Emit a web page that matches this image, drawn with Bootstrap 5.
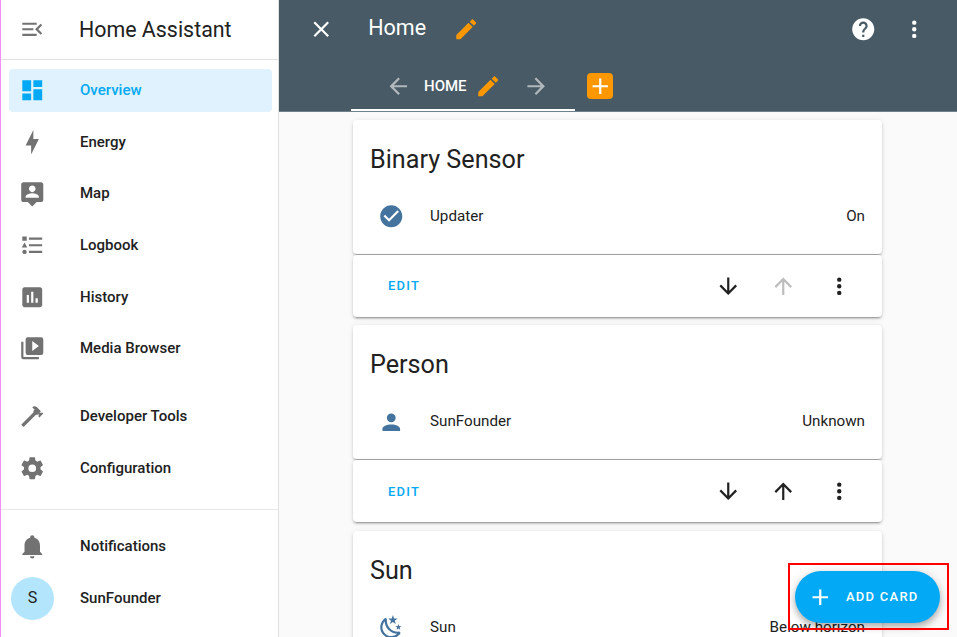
<!DOCTYPE html>
<html lang="en">
<head>
  <meta charset="UTF-8">
  <meta name="viewport" content="width=device-width, initial-scale=1.0" />
  <title>Home Assistant</title>
  <link href="https://cdn.jsdelivr.net/npm/bootstrap@5.3.0/dist/css/bootstrap.min.css" rel="stylesheet">
  <style>
    body {
      font-family: Roboto, "Liberation Sans", sans-serif;
      color: #212121;
      background: #fafafa;
      height: 100vh;
      overflow: hidden;
    }

    .mdi {
      width: 26.5px;
      height: 26.5px;
      fill: currentColor;
      flex: none;
      display: block;
    }

    .app-shell {
      height: 637px;
      border-left: 1px solid #f48cf4;
    }

    /* sidebar */
    .ha-sidebar {
      width: 278px;
      flex: none;
      background: #fff;
      border-right: 1px solid #e0e0e0;
    }

    .side-head {
      height: 60px;
      border-bottom: 1px solid #e0e0e0;
      padding-left: 18px;
      color: #727272;
    }

    .side-title {
      font-size: 21.4px;
      line-height: 1;
      margin-left: 33.5px;
      color: #212121;
    }

    .side-list {
      padding: 8.8px 6px 0 8px;
    }

    .side-item {
      height: 43px;
      margin-bottom: 8.67px;
      padding-left: 10px;
      border-radius: 4px;
      color: #212121;
      font-size: 15px;
      font-weight: 500;
      text-decoration: none;
    }

    .side-item .mdi {
      color: #727272;
      margin-right: 34.5px;
    }

    .side-item.is-active {
      background: #dff2fd;
      color: #03a9f4;
    }

    .side-item.is-active .mdi {
      color: #03a9f4;
    }

    .side-gap {
      margin-top: 16px;
    }

    .side-rule {
      border-top: 1px solid #e8e8e8;
      margin: 11px 0 15px;
    }

    .side-avatar {
      width: 43px;
      height: 43px;
      flex: none;
      margin: 0 26px 0 -8px;
      border-radius: 50%;
      background: #b3e5fc;
      font-size: 16px;
      font-weight: 400;
    }

    /* edit header */
    .edit-bar {
      height: 112px;
      flex: none;
      background: #475a65;
      color: #fff;
      border-bottom: 1px solid #6f818b;
    }

    .bar-top {
      height: 59px;
      padding-left: 29px;
    }

    .bar-title {
      font-size: 21.5px;
      margin: -2px 0 0 33.75px;
    }

    .tab-pencil {
      color: #ff9800;
    }

    .bar-pencil {
      margin-left: 27px;
    }

    .bar-end {
      padding-right: 29.75px;
      gap: 24.5px;
    }

    .bar-tabs {
      margin-left: 72px;
      height: 52px;
    }

    .tab-current {
      width: 224px;
      height: 52px;
      padding: 4px 25.75px 0 33.75px;
      border-bottom: 2px solid #fff;
      font-size: 15px;
      font-weight: 500;
    }

    .tab-arrow {
      color: #b1b8bc;
    }

    .tab-label {
      margin-left: 12.75px;
      margin-right: 8.5px;
    }

    .tab-add {
      width: 26px;
      height: 26px;
      margin: 2px 0 0 12px;
      border-radius: 4px;
      background: #ff9800;
    }

    /* cards */
    .card-column {
      width: 529px;
      margin-left: 74px;
      padding-top: 8px;
    }

    .ha-card {
      border: 0;
      border-radius: 4px;
      background: #fff;
      box-shadow: 0 2px 2px rgba(0, 0, 0, .14), 0 1px 5px rgba(0, 0, 0, .12), 0 3px 1px -2px rgba(0, 0, 0, .2);
    }

    .card-main {
      height: 134px;
      padding: 22px 17px 0 17px;
      margin-bottom: 1px;
    }

    .card-name {
      font-size: 25.2px;
      font-weight: 400;
      line-height: 36px;
      margin: 0 0 18.5px;
    }

    .entity-row {
      font-size: 15.2px;
      height: 40px;
    }

    .entity-icon {
      color: #44739e;
      margin-right: 25.75px;
      margin-left: 7.75px;
    }

    .card-actions {
      height: 62px;
      margin-bottom: 8.4px;
      padding: 0 30px 0 35px;
    }

    .edit-link {
      font-size: 13px;
      font-weight: 500;
      letter-spacing: 1.2px;
      color: #03a9f4;
      text-decoration: none;
    }

    .action-set {
      gap: 29px;
    }

    .action-off {
      color: #bdbdbd;
    }

    /* floating button */
    .add-fab {
      position: absolute;
      left: 795px;
      top: 571px;
      width: 145px;
      height: 52px;
      padding-left: 11.75px;
      border: 0;
      border-radius: 26px;
      background: #03a9f4;
      color: #fff;
      font-size: 13px;
      font-weight: 500;
      letter-spacing: 1.25px;
      box-shadow: 0 4px 6px rgba(0, 0, 0, .25), 0 1px 12px rgba(0, 0, 0, .12);
    }

    .add-fab .mdi {
      margin-right: 12.75px;
    }

    .fab-mark {
      position: absolute;
      left: 788px;
      top: 563px;
      width: 161px;
      height: 67px;
      border: 2px solid #f00;
      pointer-events: none;
    }
  </style>
</head>

<body>
  <div class="app-shell d-flex">

    <aside class="ha-sidebar d-flex flex-column">
      <div class="side-head d-flex align-items-center">
        <svg class="mdi" viewBox="0 0 24 24"><path d="M21,15.61L19.59,17L14.58,12L19.59,7L21,8.39L17.44,12L21,15.61M3,6H16V8H3V6M3,13V11H13V13H3M3,18V16H16V18H3Z"/></svg>
        <span class="side-title">Home Assistant</span>
      </div>
      <nav class="side-list nav flex-column flex-nowrap">
        <a class="side-item is-active d-flex align-items-center" href="#"><svg class="mdi" viewBox="0 0 24 24"><path d="M13,3V9H21V3M13,21H21V11H13M3,21H11V15H3M3,13H11V3H3V13Z"/></svg>Overview</a>
        <a class="side-item d-flex align-items-center" href="#"><svg class="mdi" viewBox="0 0 24 24"><path d="M11 15H6L13 1V9H18L11 23V15Z"/></svg>Energy</a>
        <a class="side-item d-flex align-items-center" href="#"><svg class="mdi" viewBox="0 0 24 24"><path d="M2 4C2 2.9 2.9 2 4 2H20C21.1 2 22 2.9 22 4V18C22 19.1 21.1 20 20 20H16L12 24L8 20H4C2.9 20 2 19.1 2 18V4M12 5C10.34 5 9 6.34 9 8S10.34 11 12 11 15 9.66 15 8 13.66 5 12 5M18 16V15C18 13 14 11.9 12 11.9S6 13 6 15V16H18Z"/></svg>Map</a>
        <a class="side-item d-flex align-items-center" href="#"><svg class="mdi" viewBox="0 0 24 24"><path d="M5,9.5L7.5,14H2.5L5,9.5M3,4H7V8H3V4M5,20A2,2 0 0,0 7,18A2,2 0 0,0 5,16A2,2 0 0,0 3,18A2,2 0 0,0 5,20M9,5V7H21V5H9M9,19H21V17H9V19M9,13H21V11H9V13Z"/></svg>Logbook</a>
        <a class="side-item d-flex align-items-center" href="#"><svg class="mdi" viewBox="0 0 24 24"><path d="M19 3H5C3.9 3 3 3.9 3 5V19C3 20.1 3.9 21 5 21H19C20.1 21 21 20.1 21 19V5C21 3.9 20.1 3 19 3M9 17H7V10H9V17M13 17H11V7H13V17M17 17H15V13H17V17Z"/></svg>History</a>
        <a class="side-item d-flex align-items-center" href="#"><svg class="mdi" viewBox="0 0 24 24"><path d="M4,6H2V20A2,2 0 0,0 4,22H18V20H4M20,2H8A2,2 0 0,0 6,4V16A2,2 0 0,0 8,18H20A2,2 0 0,0 22,16V4A2,2 0 0,0 20,2M12,14.5V5.5L18,10L12,14.5Z"/></svg>Media Browser</a>
        <a class="side-item side-gap d-flex align-items-center" href="#"><svg class="mdi" viewBox="0 0 24 24"><path d="M2 19.63L13.43 8.2L12.72 7.5L14.14 6.07L12 3.89C13.2 2.7 15.09 2.7 16.27 3.89L19.87 7.5L18.45 8.91H21.29L22 9.62L18.45 13.21L17.74 12.5V9.62L16.27 11.04L15.56 10.33L4.13 21.76L2 19.63Z"/></svg>Developer Tools</a>
        <a class="side-item d-flex align-items-center" href="#"><svg class="mdi" viewBox="0 0 24 24"><path d="M12,15.5A3.5,3.5 0 0,1 8.5,12A3.5,3.5 0 0,1 12,8.5A3.5,3.5 0 0,1 15.5,12A3.5,3.5 0 0,1 12,15.5M19.43,12.97C19.47,12.65 19.5,12.33 19.5,12C19.5,11.67 19.47,11.34 19.43,11L21.54,9.37C21.73,9.22 21.78,8.95 21.66,8.73L19.66,5.27C19.54,5.05 19.27,4.96 19.05,5.05L16.56,6.05C16.04,5.66 15.5,5.32 14.87,5.07L14.5,2.42C14.46,2.18 14.25,2 14,2H10C9.75,2 9.54,2.18 9.5,2.42L9.13,5.07C8.5,5.32 7.96,5.66 7.44,6.05L4.95,5.05C4.73,4.96 4.46,5.05 4.34,5.27L2.34,8.73C2.21,8.95 2.27,9.22 2.46,9.37L4.57,11C4.53,11.34 4.5,11.67 4.5,12C4.5,12.33 4.53,12.65 4.57,12.97L2.46,14.63C2.27,14.78 2.21,15.05 2.34,15.27L4.34,18.73C4.46,18.95 4.73,19.03 4.95,18.95L7.44,17.94C7.96,18.34 8.5,18.68 9.13,18.93L9.5,21.58C9.54,21.82 9.75,22 10,22H14C14.25,22 14.46,21.82 14.5,21.58L14.87,18.93C15.5,18.67 16.04,18.34 16.56,17.94L19.05,18.95C19.27,19.03 19.54,18.95 19.66,18.73L21.66,15.27C21.78,15.05 21.73,14.78 21.54,14.63L19.43,12.97Z"/></svg>Configuration</a>
      </nav>
      <div class="side-rule"></div>
      <div class="side-list nav flex-column flex-nowrap pt-0">
        <a class="side-item d-flex align-items-center" href="#"><svg class="mdi" viewBox="0 0 24 24"><path d="M21,19V20H3V19L5,17V11C5,7.9 7.03,5.17 10,4.29C10,4.19 10,4.1 10,4A2,2 0 0,1 12,2A2,2 0 0,1 14,4C14,4.1 14,4.19 14,4.29C16.97,5.17 19,7.9 19,11V17L21,19M14,21A2,2 0 0,1 12,23A2,2 0 0,1 10,21"/></svg>Notifications</a>
        <a class="side-item d-flex align-items-center" href="#"><span class="side-avatar d-flex align-items-center justify-content-center">S</span>SunFounder</a>
      </div>
    </aside>

    <main class="flex-grow-1 d-flex flex-column overflow-hidden">
      <header class="edit-bar">
        <div class="bar-top d-flex align-items-center">
          <svg class="mdi" viewBox="0 0 24 24"><path d="M19,6.41L17.59,5L12,10.59L6.41,5L5,6.41L10.59,12L5,17.59L6.41,19L12,13.41L17.59,19L19,17.59L13.41,12L19,6.41Z"/></svg>
          <span class="bar-title">Home</span>
          <svg class="mdi tab-pencil bar-pencil" viewBox="0 0 24 24"><path d="M20.71,7.04C21.1,6.65 21.1,6 20.71,5.63L18.37,3.29C18,2.9 17.35,2.9 16.96,3.29L15.12,5.12L18.87,8.87M3,17.25V21H6.75L17.81,9.93L14.06,6.18L3,17.25Z"/></svg>
          <div class="bar-end d-flex ms-auto">
            <svg class="mdi" viewBox="0 0 24 24"><path d="M15.07,11.25L14.17,12.17C13.45,12.89 13,13.5 13,15H11V14.5C11,13.39 11.45,12.39 12.17,11.67L13.41,10.41C13.78,10.05 14,9.55 14,9C14,7.89 13.1,7 12,7A2,2 0 0,0 10,9H8A4,4 0 0,1 12,5A4,4 0 0,1 16,9C16,9.88 15.64,10.67 15.07,11.25M13,19H11V17H13M12,2A10,10 0 0,0 2,12A10,10 0 0,0 12,22A10,10 0 0,0 22,12C22,6.47 17.5,2 12,2Z"/></svg>
            <svg class="mdi" viewBox="0 0 24 24"><path d="M12,16A2,2 0 0,1 14,18A2,2 0 0,1 12,20A2,2 0 0,1 10,18A2,2 0 0,1 12,16M12,10A2,2 0 0,1 14,12A2,2 0 0,1 12,14A2,2 0 0,1 10,12A2,2 0 0,1 12,10M12,4A2,2 0 0,1 14,6A2,2 0 0,1 12,8A2,2 0 0,1 10,6A2,2 0 0,1 12,4Z"/></svg>
          </div>
        </div>
        <div class="bar-tabs d-flex align-items-center">
          <div class="tab-current d-flex align-items-center">
            <svg class="mdi tab-arrow" viewBox="0 0 24 24"><path d="M20,11V13H8L13.5,18.5L12.08,19.92L4.16,12L12.08,4.08L13.5,5.5L8,11H20Z"/></svg>
            <span class="tab-label">HOME</span>
            <svg class="mdi tab-pencil" viewBox="0 0 24 24"><path d="M20.71,7.04C21.1,6.65 21.1,6 20.71,5.63L18.37,3.29C18,2.9 17.35,2.9 16.96,3.29L15.12,5.12L18.87,8.87M3,17.25V21H6.75L17.81,9.93L14.06,6.18L3,17.25Z"/></svg>
            <svg class="mdi tab-arrow ms-auto" viewBox="0 0 24 24"><path d="M4,11V13H16L10.5,18.5L11.92,19.92L19.84,12L11.92,4.08L10.5,5.5L16,11H4Z"/></svg>
          </div>
          <span class="tab-add d-flex align-items-center justify-content-center">
            <svg class="mdi" viewBox="0 0 24 24"><path d="M19,13H13V19H11V13H5V11H11V5H13V11H19V13Z"/></svg>
          </span>
        </div>
      </header>

      <div class="card-column">
        <div class="card ha-card card-main">
          <h2 class="card-name">Binary Sensor</h2>
          <div class="entity-row d-flex align-items-center">
            <svg class="mdi entity-icon" viewBox="0 0 24 24"><path d="M12 2C6.5 2 2 6.5 2 12S6.5 22 12 22 22 17.5 22 12 17.5 2 12 2M10 17L5 12L6.41 10.59L10 14.17L17.59 6.58L19 8L10 17Z"/></svg>
            <span>Updater</span>
            <span class="ms-auto">On</span>
          </div>
        </div>
        <div class="card ha-card card-actions flex-row align-items-center">
          <a class="edit-link" href="#">EDIT</a>
          <div class="action-set d-flex ms-auto">
            <svg class="mdi" viewBox="0 0 24 24"><path d="M11,4H13V16L18.5,10.5L19.92,11.92L12,19.84L4.08,11.92L5.5,10.5L11,16V4Z"/></svg>
            <svg class="mdi action-off" viewBox="0 0 24 24"><path d="M13,20H11V8L5.5,13.5L4.08,12.08L12,4.16L19.92,12.08L18.5,13.5L13,8V20Z"/></svg>
            <svg class="mdi" viewBox="0 0 24 24"><path d="M12,16A2,2 0 0,1 14,18A2,2 0 0,1 12,20A2,2 0 0,1 10,18A2,2 0 0,1 12,16M12,10A2,2 0 0,1 14,12A2,2 0 0,1 12,14A2,2 0 0,1 10,12A2,2 0 0,1 12,10M12,4A2,2 0 0,1 14,6A2,2 0 0,1 12,8A2,2 0 0,1 10,6A2,2 0 0,1 12,4Z"/></svg>
          </div>
        </div>

        <div class="card ha-card card-main">
          <h2 class="card-name">Person</h2>
          <div class="entity-row d-flex align-items-center">
            <svg class="mdi entity-icon" viewBox="0 0 24 24"><path d="M12,4A4,4 0 0,1 16,8A4,4 0 0,1 12,12A4,4 0 0,1 8,8A4,4 0 0,1 12,4M12,14C16.42,14 20,15.79 20,18V20H4V18C4,15.79 7.58,14 12,14Z"/></svg>
            <span>SunFounder</span>
            <span class="ms-auto">Unknown</span>
          </div>
        </div>
        <div class="card ha-card card-actions flex-row align-items-center">
          <a class="edit-link" href="#">EDIT</a>
          <div class="action-set d-flex ms-auto">
            <svg class="mdi" viewBox="0 0 24 24"><path d="M11,4H13V16L18.5,10.5L19.92,11.92L12,19.84L4.08,11.92L5.5,10.5L11,16V4Z"/></svg>
            <svg class="mdi" viewBox="0 0 24 24"><path d="M13,20H11V8L5.5,13.5L4.08,12.08L12,4.16L19.92,12.08L18.5,13.5L13,8V20Z"/></svg>
            <svg class="mdi" viewBox="0 0 24 24"><path d="M12,16A2,2 0 0,1 14,18A2,2 0 0,1 12,20A2,2 0 0,1 10,18A2,2 0 0,1 12,16M12,10A2,2 0 0,1 14,12A2,2 0 0,1 12,14A2,2 0 0,1 10,12A2,2 0 0,1 12,10M12,4A2,2 0 0,1 14,6A2,2 0 0,1 12,8A2,2 0 0,1 10,6A2,2 0 0,1 12,4Z"/></svg>
          </div>
        </div>

        <div class="card ha-card card-main">
          <h2 class="card-name">Sun</h2>
          <div class="entity-row d-flex align-items-center">
            <svg class="mdi entity-icon" viewBox="0 0 24 24"><path d="M17.75,4.09L15.22,6.03L16.13,9.09L13.5,7.28L10.87,9.09L11.78,6.03L9.25,4.09L12.44,4L13.5,1L14.56,4L17.75,4.09M21.25,11L19.61,12.25L20.2,14.23L18.5,13.06L16.8,14.23L17.39,12.25L15.75,11L17.81,10.95L18.5,9L19.19,10.95L21.25,11M18.97,15.95C19.8,15.87 20.69,17.05 20.16,17.8C19.84,18.25 19.5,18.67 19.08,19.07C15.17,23 8.84,23 4.94,19.07C1.03,15.17 1.03,8.83 4.94,4.93C5.34,4.53 5.76,4.17 6.21,3.85C6.96,3.32 8.14,4.21 8.06,5.04C7.79,7.9 8.75,10.87 10.95,13.06C13.14,15.26 16.1,16.22 18.97,15.95M17.33,17.97C14.5,17.81 11.7,16.64 9.53,14.5C7.36,12.31 6.2,9.5 6.04,6.68C3.23,9.82 3.34,14.64 6.35,17.66C9.37,20.67 14.19,20.78 17.33,17.97Z"/></svg>
            <span>Sun</span>
            <span class="ms-auto">Below horizon</span>
          </div>
        </div>
      </div>
    </main>
  </div>

  <button class="add-fab d-flex align-items-center">
    <svg class="mdi" viewBox="0 0 24 24"><path d="M19,13H13V19H11V13H5V11H11V5H13V11H19V13Z"/></svg>
    ADD CARD
  </button>
  <div class="fab-mark"></div>

  <script src="https://cdn.jsdelivr.net/npm/bootstrap@5.3.0/dist/js/bootstrap.bundle.min.js"></script>
</body>
</html>
